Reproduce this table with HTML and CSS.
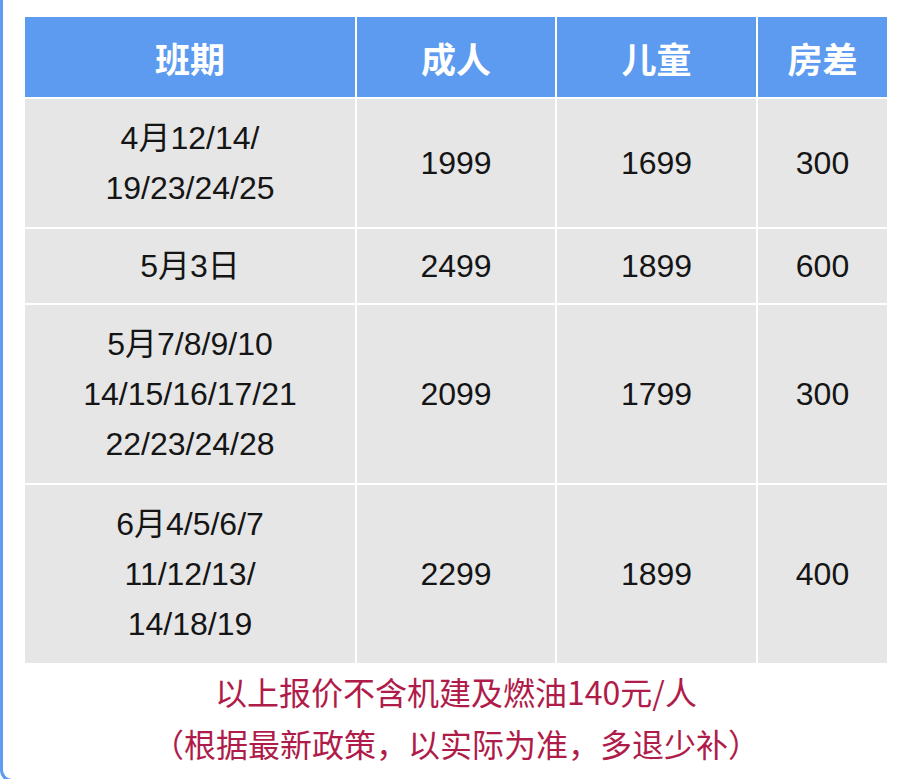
FILE: index.html
```html
<!DOCTYPE html>
<html lang="zh-CN">
<head>
<meta charset="utf-8">
<title>价格表</title>
<link rel="stylesheet" href="styles.css">
</head>
<body>
<div class="frame">
  <table class="price">
    <colgroup>
      <col class="c1"><col class="c2"><col class="c3"><col class="c4">
    </colgroup>
    <thead>
      <tr><th>班期</th><th>成人</th><th>儿童</th><th>房差</th></tr>
    </thead>
    <tbody>
      <tr><td>4月12/14/<br>19/23/24/25</td><td>1999</td><td>1699</td><td>300</td></tr>
      <tr class="short"><td>5月3日</td><td>2499</td><td>1899</td><td>600</td></tr>
      <tr><td>5月7/8/9/10<br>14/15/16/17/21<br>22/23/24/28</td><td>2099</td><td>1799</td><td>300</td></tr>
      <tr><td>6月4/5/6/7<br>11/12/13/<br>14/18/19</td><td>2299</td><td>1899</td><td>400</td></tr>
    </tbody>
  </table>
  <div class="note">
    <p>以上报价不含机建及燃油140元/人</p>
    <p>（根据最新政策，以实际为准，多退少补）</p>
  </div>
</div>
</body>
</html>
```
FILE: styles.css
```css
html, body {
  margin: 0;
  padding: 0;
  background: #ffffff;
  overflow: hidden;
}
.frame {
  box-sizing: border-box;
  width: 100%;
  height: 782px;
  border-left: 3px solid #5f9df2;
  border-bottom: 3px solid #5f9df2;
  border-bottom-left-radius: 12px;
  padding: 15px 0 0 20px;
}
.price {
  table-layout: fixed;
  border-collapse: separate;
  border-spacing: 2px;
  width: 866px;
}
.c1 { width: 330px; }
.c2 { width: 198px; }
.c3 { width: 199px; }
.c4 { width: 129px; }
.price th {
  height: 80px;
  padding: 0;
  background: #5c9bef;
  color: #ffffff;
  font-family: "Noto Sans CJK SC", "Liberation Sans", sans-serif;
  font-weight: 700;
  font-size: 35px;
  text-align: center;
  vertical-align: middle;
}
.price td {
  padding: 14px 0;
  background: #e6e6e6;
  color: #151515;
  font-family: "Liberation Sans", "Noto Sans CJK SC", sans-serif;
  font-size: 32px;
  line-height: 50px;
  text-align: center;
  vertical-align: middle;
}
.price tr.short td {
  padding: 12px 0;
}
.note {
  width: 866px;
  text-align: center;
  color: #b01c4a;
  font-family: "Noto Sans CJK SC", "Liberation Sans", sans-serif;
  font-size: 32px;
  line-height: 52px;
}
.note p {
  margin: 0;
}
```
